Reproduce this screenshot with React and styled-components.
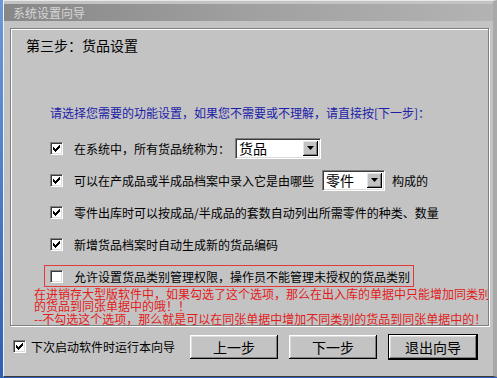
import styled, { createGlobalStyle } from "styled-components";

const GlobalStyle = createGlobalStyle`
  html, body {
    margin: 0;
    padding: 0;
  }
  body {
    width: 497px;
    height: 378px;
    overflow: hidden;
    background: linear-gradient(180deg, #6b9ad8, #2d5fb5);
    font-family: "Noto Sans CJK SC", "Noto Sans", sans-serif;
  }
`;

const Window = styled.div`
  display: flex;
  flex-direction: column;
  box-sizing: border-box;
  width: 494px;
  height: 377px;
  margin-left: 3px;
  padding-top: 3px;
  background: #c3c3c3;
  border-top: 1px solid #e8e8e8;
  border-left: 1px solid #f4f4f4;
  border-right: 4px solid #a9a9a9;
  border-bottom: 1px solid #3c3c3c;
`;

const TitleBar = styled.div`
  height: 17px;
  line-height: 17px;
  padding-left: 9px;
  font-size: 12px;
  color: #d6d6d6;
  background: linear-gradient(90deg, #878787 0%, #a0a0a0 50%, #b3b3b3 100%);
`;

const Panel = styled.section`
  box-sizing: border-box;
  height: 298px;
  margin: 7px 4px 0 6px;
  border: 1px solid #808080;
  box-shadow: inset 1px 1px 0 #fff, 1px 1px 0 #fff;
  display: flex;
  flex-direction: column;
  align-items: flex-start;
  overflow: hidden;
`;

const Heading = styled.div`
  margin: 8px 0 0 15px;
  font-size: 14px;
  line-height: 16px;
  color: #000;
`;

const Hint = styled.div`
  margin: 53px 0 0 39px;
  font-size: 12px;
  line-height: 14px;
  color: #1c1ca8;
  white-space: nowrap;
`;

const OptionList = styled.div`
  display: flex;
  flex-direction: column;
  align-items: flex-start;
  gap: 10px;
  margin: 17px 0 0 33px;
`;

const OptionRow = styled.div`
  display: flex;
  align-items: center;
  gap: 11px;
  box-sizing: border-box;
  height: 22px;
  padding: 0 3px 0 5px;
  border: 1px solid ${(p) => (p.$flagged ? "#e23a3a" : "transparent")};
  font-size: 12px;
  color: #000;
  white-space: nowrap;
`;

const Label = styled.span`
  display: flex;
  align-items: center;
`;

const Notes = styled.div`
  width: 456px;
  margin: 1px 0 0 23px;
  font-size: 12px;
  line-height: 12.3px;
  color: #e21b1b;
  white-space: pre-line;
`;

const Box = styled.span`
  display: inline-flex;
  align-items: center;
  justify-content: center;
  box-sizing: border-box;
  width: 13px;
  height: 13px;
  flex: none;
  background: #fff;
  border-top: 1px solid #808080;
  border-left: 1px solid #808080;
  border-bottom: 1px solid #fff;
  border-right: 1px solid #fff;
  box-shadow: inset 1px 1px 0 #3a3a3a, inset -1px -1px 0 #dcdcdc;
`;

const Select = styled.span`
  display: inline-flex;
  align-items: center;
  box-sizing: border-box;
  width: ${(p) => p.$width}px;
  height: 21px;
  margin: 0 ${(p) => p.$after}px 0 ${(p) => p.$before}px;
  padding: 0 2px 0 3px;
  background: #fff;
  border-top: 1px solid #808080;
  border-left: 1px solid #808080;
  border-bottom: 1px solid #fff;
  border-right: 1px solid #fff;
  box-shadow: inset 1px 1px 0 #3a3a3a, inset -1px -1px 0 #dcdcdc;
  font-size: 14px;
  color: #000;
`;

const DropButton = styled.span`
  display: inline-flex;
  align-items: center;
  justify-content: center;
  width: 15px;
  height: 15px;
  margin-left: auto;
  background: #c3c3c3;
  box-shadow: inset -1px -1px 0 #000, inset 1px 1px 0 #e6e6e6,
    inset -2px -2px 0 #808080;
`;

const BottomRow = styled.div`
  display: flex;
  align-items: center;
  height: 25px;
  margin-top: 8px;
  padding: 0 15px 0 9px;
`;

const RunAgain = styled.label`
  display: flex;
  align-items: center;
  gap: 5px;
  font-size: 12px;
  color: #000;
`;

const Buttons = styled.div`
  display: flex;
  align-items: center;
  gap: 11px;
  margin-left: auto;
`;

const Button = styled.button`
  box-sizing: border-box;
  width: ${(p) => (p.$default ? 90 : 88)}px;
  height: ${(p) => (p.$default ? 26 : 24)}px;
  padding: 0;
  font-family: inherit;
  font-size: 14px;
  color: #000;
  background: #c3c3c3;
  border: ${(p) => (p.$default ? "1px solid #000" : "none")};
  box-shadow: inset -1px -1px 0 #000, inset 1px 1px 0 #fff,
    inset -2px -2px 0 #808080, inset 2px 2px 0 #dcdcdc;
`;

const notes =
  "在进销存大型版软件中，如果勾选了这个选项，那么在出入库的单据中只能增加同类别的货品到同张单据中的哦！！\n" +
  "--不勾选这个选项，那么就是可以在同张单据中增加不同类别的货品到同张单据中的！";

function Check({ checked }) {
  return (
    <Box>
      {checked && (
        <svg width="7" height="7" viewBox="0 0 7 7">
          <path
            d="M0 2h1v3H0zM1 3h1v3H1zM2 4h1v3H2zM3 3h1v3H3zM4 2h1v3H4zM5 1h1v3H5zM6 0h1v3H6z"
            fill="#000"
          />
        </svg>
      )}
    </Box>
  );
}

function Dropdown({ value, width, before, after }) {
  return (
    <Select $width={width} $before={before} $after={after}>
      {value}
      <DropButton>
        <svg width="7" height="4" viewBox="0 0 7 4">
          <path d="M0 0h7L3.5 4z" fill="#000" />
        </svg>
      </DropButton>
    </Select>
  );
}

export default function App() {
  return (
    <>
      <GlobalStyle />
      <Window>
        <TitleBar>系统设置向导</TitleBar>
        <Panel>
          <Heading>第三步：货品设置</Heading>
          <Hint>请选择您需要的功能设置，如果您不需要或不理解，请直接按[下一步]：</Hint>
          <OptionList>
            <OptionRow>
              <Check checked />
              <Label>
                在系统中，所有货品统称为：
                <Dropdown value="货品" width={86} before={5} after={0} />
              </Label>
            </OptionRow>
            <OptionRow>
              <Check checked />
              <Label>
                可以在产成品或半成品档案中录入它是由哪些
                <Dropdown value="零件" width={63} before={8} after={7} />
                构成的
              </Label>
            </OptionRow>
            <OptionRow>
              <Check checked />
              <Label>零件出库时可以按成品/半成品的套数自动列出所需零件的种类、数量</Label>
            </OptionRow>
            <OptionRow>
              <Check checked />
              <Label>新增货品档案时自动生成新的货品编码</Label>
            </OptionRow>
            <OptionRow $flagged>
              <Check />
              <Label>允许设置货品类别管理权限，操作员不能管理未授权的货品类别</Label>
            </OptionRow>
          </OptionList>
          <Notes>{notes}</Notes>
        </Panel>
        <BottomRow>
          <RunAgain>
            <Check checked />
            下次启动软件时运行本向导
          </RunAgain>
          <Buttons>
            <Button>上一步</Button>
            <Button>下一步</Button>
            <Button $default>退出向导</Button>
          </Buttons>
        </BottomRow>
      </Window>
    </>
  );
}
